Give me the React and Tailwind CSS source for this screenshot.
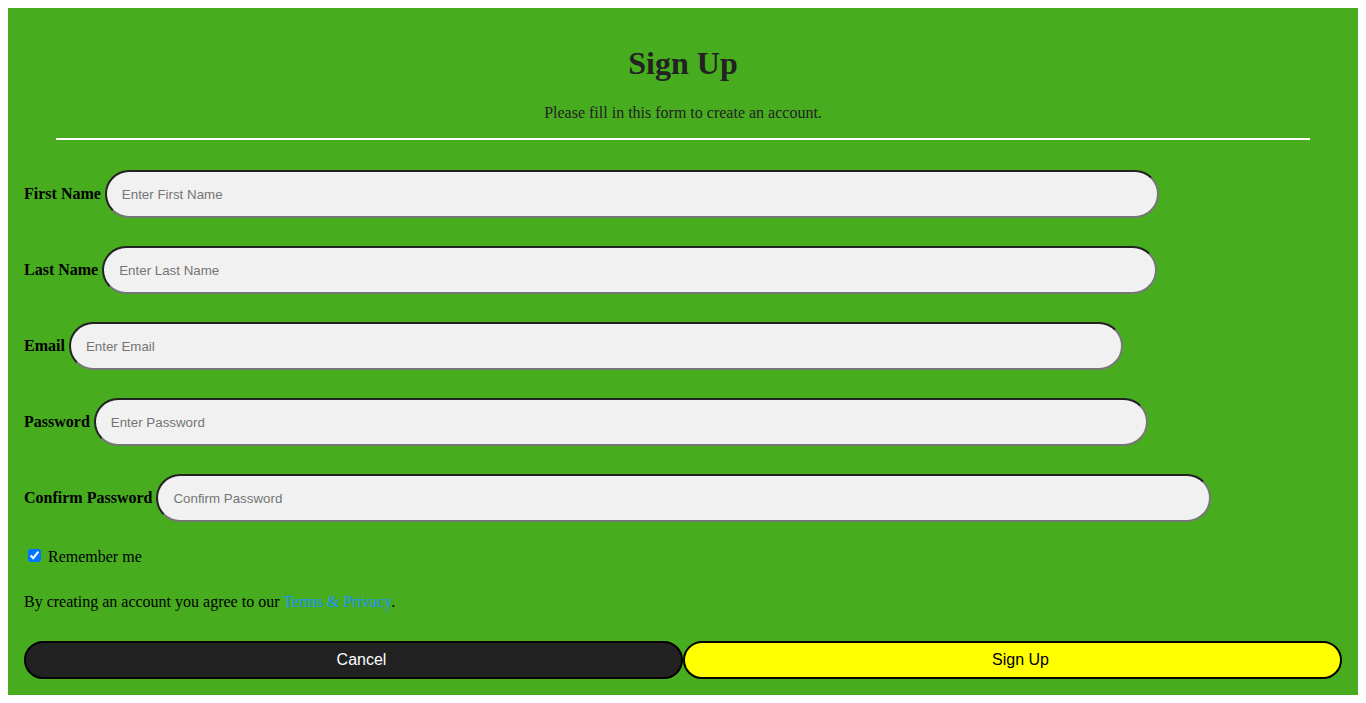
import React from 'react';

const fields = [
  { label: 'First Name', placeholder: 'Enter First Name', type: 'text' },
  { label: 'Last Name', placeholder: 'Enter Last Name', type: 'text' },
  { label: 'Email', placeholder: 'Enter Email', type: 'text' },
  { label: 'Password', placeholder: 'Enter Password', type: 'password' },
  { label: 'Confirm Password', placeholder: 'Confirm Password', type: 'password' },
];

export default function App() {
  return (
    <div className="min-h-screen bg-white p-2 font-['Liberation_Serif',serif] text-black">
      <form className="bg-[#47ad1f] p-4">
        {/* heading block */}
        <h1 className="mt-[21px] text-center text-[32px] font-bold leading-[37px] text-[#222]">Sign Up</h1>
        <p className="mt-[22px] text-center text-base leading-[18px] text-[#222]">
          Please fill in this form to create an account.
        </p>
        <hr className="mx-8 mt-4 border-0 border-t-2 border-white" />

        {/* fields */}
        <div className="mt-[30px] flex flex-col gap-[28px]">
          {fields.map((f) => (
            <div key={f.label} className="flex items-center gap-[4px]">
              <label className="text-base font-bold leading-[18px]">{f.label}</label>
              <input
                type={f.type}
                placeholder={f.placeholder}
                className="h-12 w-4/5 rounded-full border-2 border-t-[#222] border-l-[#222] border-r-[#767676] border-b-[#767676] bg-[#f1f1f1] px-[15px] font-['Liberation_Sans',Arial,sans-serif] text-[13.33px] text-black outline-none placeholder:text-[#757575]"
              />
            </div>
          ))}
        </div>

        <label className="mt-[26px] flex items-center text-base leading-[18px]">
          <input type="checkbox" defaultChecked className="mb-[4px] ml-1 mr-[7px] h-[13px] w-[13px]" />
          Remember me
        </label>

        <p className="mt-[27px] text-base leading-[18px]">
          By creating an account you agree to our{' '}
          <a href="#" className="text-[#1e90ff]">Terms &amp; Privacy</a>.
        </p>

        {/* buttons */}
        <div className="mt-[30px] flex">
          <button
            type="button"
            className="h-[38px] w-1/2 rounded-full border-2 border-black bg-[#222] pl-4 font-['Liberation_Sans',Arial,sans-serif] text-base text-white"
          >
            Cancel
          </button>
          <button
            type="submit"
            className="h-[38px] w-1/2 rounded-full border-2 border-black bg-[#ffff00] pl-4 font-['Liberation_Sans',Arial,sans-serif] text-base text-black"
          >
            Sign Up
          </button>
        </div>
      </form>
    </div>
  );
}
